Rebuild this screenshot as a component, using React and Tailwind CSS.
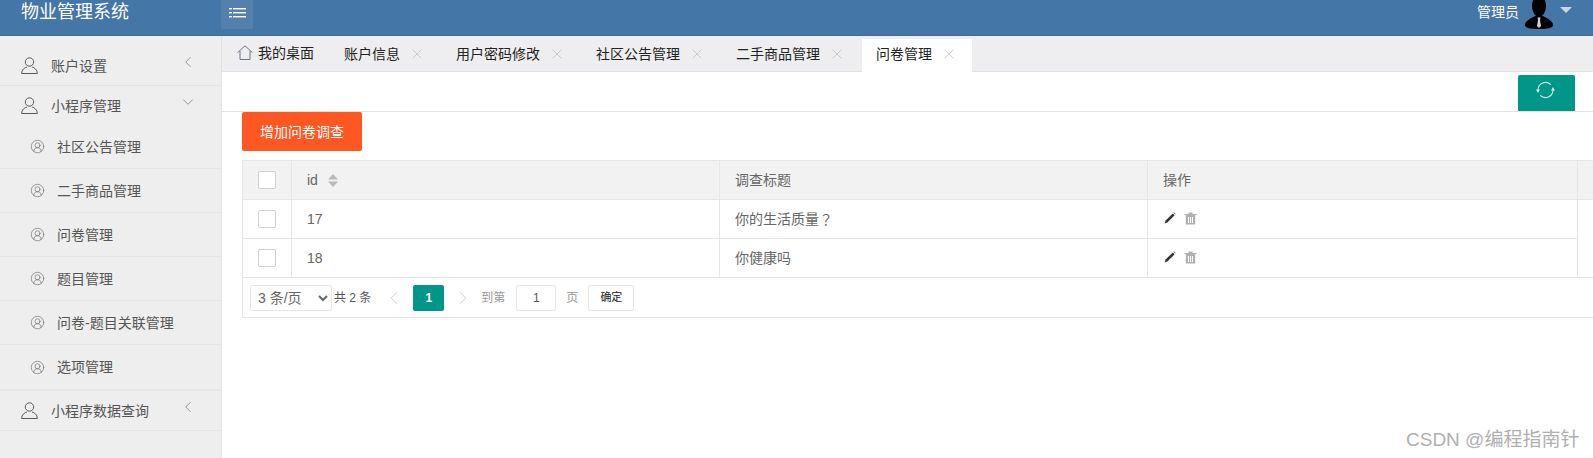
import { ChevronLeft, ChevronDown, ChevronRight, CircleUserRound, X } from 'lucide-react';

const subMenus = ['社区公告管理', '二手商品管理', '问卷管理', '题目管理', '问卷-题目关联管理', '选项管理'];

const tabs = [
  { name: '账户信息' },
  { name: '用户密码修改' },
  { name: '社区公告管理' },
  { name: '二手商品管理' },
  { name: '问卷管理', active: true },
];

const rows = [
  { id: 17, title: '你的生活质量', mark: '？' },
  { id: 18, title: '你健康吗' },
];

const MenuIcon = () => (
  <svg width="17" height="10" viewBox="0 0 17 10" fill="#fff">
    <rect x="0" y="0" width="3" height="1.4" />
    <rect x="4" y="0" width="13" height="1.4" />
    <rect x="0" y="4" width="3" height="1.4" />
    <rect x="4" y="4" width="13" height="1.4" />
    <rect x="0" y="8" width="3" height="1.4" />
    <rect x="4" y="8" width="13" height="1.4" />
  </svg>
);

const HomeIcon = () => (
  <svg width="16" height="15" viewBox="0 0 16 15" fill="none" stroke="#6a7390" strokeWidth="1">
    <path d="M0.6 7.6 L8 0.8 L15.4 7.6" />
    <path d="M3 6 V14.5 H13 V6" />
  </svg>
);

const UserIcon = () => (
  <svg width="17" height="17" viewBox="0 0 17 17" fill="none" stroke="#5a5a5a" strokeWidth="1">
    <circle cx="8.5" cy="5" r="4.2" />
    <path d="M0.6 16.5 C0.6 12.6 3.8 10.4 6 10 M16.4 16.5 C16.4 12.6 13.2 10.4 11 10 M0.6 16.5 H16.4" />
  </svg>
);

const Avatar = () => (
  <svg width="28" height="29" viewBox="0 0 28 29">
    <ellipse cx="14" cy="6" rx="7" ry="11" fill="#000" />
    <path d="M0 25 C0 21 5 19 10 16 L18 16 C23 19 28 21 28 25 C28 28 23 29 14 29 C5 29 0 28 0 25 Z" fill="#000" />
    <path d="M12.5 17.5 L15.5 17.5 L15 20 L16 26 L14 28 L12 26 L13 20 Z" fill="#c5d2e0" />
  </svg>
);

const RefreshIcon = () => (
  <svg width="19" height="18" viewBox="0 0 19 18" fill="none" stroke="#d4efea" strokeWidth="1.1">
    <path d="M14.8 3.7 A7.5 7.5 0 0 0 2 9" />
    <path d="M4.2 14.3 A7.5 7.5 0 0 0 17 9" />
    <path d="M0 8.6 L4 8.6 L2 12 Z" fill="#d4efea" stroke="none" />
    <path d="M15 9.4 L19 9.4 L17 6 Z" fill="#d4efea" stroke="none" />
  </svg>
);

const PencilIcon = () => (
  <svg width="12" height="12" viewBox="0 0 12 12" fill="#333">
    <path d="M0.6 11.4 L1.6 8.6 L8.8 1.4 L10.6 3.2 L3.4 10.4 Z" />
    <path d="M9.4 0.8 L10 0.4 L11.6 2 L11.2 2.6 Z" />
  </svg>
);

const TrashIcon = () => (
  <svg width="13" height="13" viewBox="0 0 13 13" fill="#b0b0b0">
    <path d="M0.5 2 H12.5 V3 H0.5 Z" />
    <path d="M4.5 0.5 H8.5 V2 H4.5 Z" />
    <path fillRule="evenodd" d="M1.8 3 H11.2 V12.5 H1.8 Z M4 5 V11 H5 V5 Z M6 5 V11 H7 V5 Z M8 5 V11 H9 V5 Z" />
  </svg>
);

const SortIcon = () => (
  <svg width="10" height="13" viewBox="0 0 10 13" fill="#b9b9b9">
    <path d="M5 0 L10 5.5 H0 Z" />
    <path d="M5 13 L0 7.5 H10 Z" />
  </svg>
);

const Checkbox = () => <div className="w-[18px] h-[18px] bg-white border border-[#d2d2d2] rounded-[2px]" />;

const TopMenu = ({ label, open }) => (
  <div className="h-[39px] flex items-center pl-[21px] relative text-[#555] text-sm">
    <UserIcon />
    <span className="ml-[13px] mt-[1px]">{label}</span>
    <div className="absolute left-[179px] top-[7px] text-[#777]">
      {open ? <ChevronDown size={18} strokeWidth={1} /> : <ChevronLeft size={18} strokeWidth={1} />}
    </div>
  </div>
);

export default function App() {
  return (
    <div className="w-[1593px] h-[458px] overflow-hidden flex flex-col bg-white relative text-sm font-['Liberation_Sans','Noto_Sans_CJK_SC',sans-serif]">
      <header className="h-[36px] shrink-0 bg-[#4476a7] border-b border-[#3f6d9b] flex">
        <div className="w-[221px] pl-[21px] text-white text-[18px] leading-[24px]">物业管理系统</div>
        <div className="w-[32px] h-[29px] bg-[#5480ae] rounded-b-[2px] flex items-start justify-center pt-[8px]">
          <MenuIcon />
        </div>
        <div className="ml-auto flex items-start pr-[21px]">
          <span className="text-white text-[14px] leading-[24px] mr-[6px]">管理员</span>
          <Avatar />
          <div className="ml-[7px] mt-[7px] w-0 h-0 border-l-[6px] border-r-[6px] border-t-[6px] border-l-transparent border-r-transparent border-t-[#c8d6e5]" />
        </div>
      </header>

      <div className="flex flex-1 min-h-0">
        <aside className="w-[222px] shrink-0 bg-[#eeeeee] border-r border-[#e2e2e2] pt-[10px]">
          <div className="border-b border-[#e4e4e4]">
            <TopMenu label="账户设置" />
          </div>
          <TopMenu label="小程序管理" open />
          <div className="border-b-2 border-[#e6e6e6]">
            {subMenus.map((item) => (
              <div key={item} className="h-[44px] flex items-center pl-[30px] border-b border-[#e4e4e4] last:border-b-0 text-[#555]">
                <CircleUserRound size={15} strokeWidth={1} color="#666" className="mr-[12px]" />
                <span>{item}</span>
              </div>
            ))}
          </div>
          <div className="border-b border-[#e4e4e4]">
            <TopMenu label="小程序数据查询" />
          </div>
        </aside>

        <main className="flex-1 min-w-0 flex flex-col">
          <div className="h-[36px] shrink-0 bg-[#eeeef0] border-b border-[#e2e2e2] flex items-end text-[#222]">
            <div className="w-[108px] h-[35px] flex items-center pl-[15px] pb-[2px]">
              <HomeIcon />
              <span className="ml-[5px]">我的桌面</span>
            </div>
            {tabs.map((tab) => (
              <div
                key={tab.name}
                className={`h-[33px] mr-[2px] flex items-center pl-[14px] pr-[15px] pb-[3px] -mb-px ${tab.active ? 'bg-white' : ''}`}
              >
                <span className="mr-[9px]">{tab.name}</span>
                <X size={16} strokeWidth={1} color="#b5b5b5" />
              </div>
            ))}
          </div>

          <div className="h-[40px] shrink-0 border-b border-[#e2e2e2] flex justify-end items-end pr-[18px]">
            <div className="w-[57px] h-[36px] bg-[#009688] rounded-t-[2px] flex items-start justify-center pt-[6px] pr-[3px]">
              <RefreshIcon />
            </div>
          </div>

          <div className="pl-[20px]">
            <button className="w-[120px] h-[39px] bg-[#ff5722] text-white text-sm rounded-[2px] block">增加问卷调查</button>

            <div className="mt-[9px] border-y border-l border-[#e6e6e6] text-[#666] -mr-px">
              <div className="h-[39px] bg-[#f2f2f2] flex border-b border-[#e6e6e6]">
                <div className="w-[49px] flex items-center justify-center border-r border-[#e6e6e6]"><Checkbox /></div>
                <div className="w-[428px] flex items-center pl-[15px] border-r border-[#e6e6e6]">
                  <span>id</span>
                  <span className="ml-[10px]"><SortIcon /></span>
                </div>
                <div className="w-[428px] flex items-center pl-[15px] border-r border-[#e6e6e6]">调查标题</div>
                <div className="w-[430px] flex items-center pl-[15px] border-r border-[#e6e6e6]">操作</div>
              </div>
              {rows.map((row) => (
                <div key={row.id} className="h-[39px] flex">
                  <div className="w-[49px] flex items-center justify-center border-r border-b border-[#e6e6e6]"><Checkbox /></div>
                  <div className="w-[428px] flex items-center pl-[15px] border-r border-b border-[#e6e6e6]">{row.id}</div>
                  <div className="w-[428px] flex items-center pl-[15px] border-r border-b border-[#e6e6e6]">
                    <span>{row.title}</span>
                    {row.mark && <span className="font-['Noto_Sans_CJK_TC',sans-serif]">{row.mark}</span>}
                  </div>
                  <div className="w-[430px] flex items-center pl-[16px] pb-[2px] gap-[8px] border-r border-b border-[#e6e6e6]">
                    <PencilIcon />
                    <TrashIcon />
                  </div>
                  <div className="flex-1" />
                </div>
              ))}
              <div className="h-[40px] border-t border-[#e6e6e6] -mt-px flex items-center pl-[7px] text-xs text-[#333]">
                <select className="w-[82px] h-[26px] bg-white border border-[#e6e6e6] rounded-[2px] pl-[3px] text-sm text-[#666] mt-[1px]" defaultValue="3">
                  <option value="3">3 条/页</option>
                </select>
                <span className="ml-[2px] text-[#555]">共 2 条</span>
                <ChevronLeft size={22} strokeWidth={1} color="#c9c9c9" className="ml-[12px]" />
                <div className="ml-[8px] w-[31px] h-[26px] bg-[#009688] rounded-[2px] text-white font-bold flex items-center justify-center">1</div>
                <ChevronRight size={22} strokeWidth={1} color="#c9c9c9" className="ml-[8px]" />
                <span className="ml-[7px] text-[#999]">到第</span>
                <div className="ml-[11px] w-[40px] h-[26px] border border-[#e6e6e6] rounded-[2px] flex items-center justify-center text-[#555]">1</div>
                <span className="ml-[10px] text-[#999]">页</span>
                <div className="ml-[10px] w-[46px] h-[26px] border border-[#e6e6e6] rounded-[2px] flex items-center justify-center text-[11px] text-[#222]">确定</div>
              </div>
            </div>
          </div>
        </main>
      </div>

      <div className="absolute left-[1406px] top-[427px] text-[19px] leading-[26px] text-[#b0b0b0] whitespace-nowrap">CSDN @编程指南针</div>
    </div>
  );
}
